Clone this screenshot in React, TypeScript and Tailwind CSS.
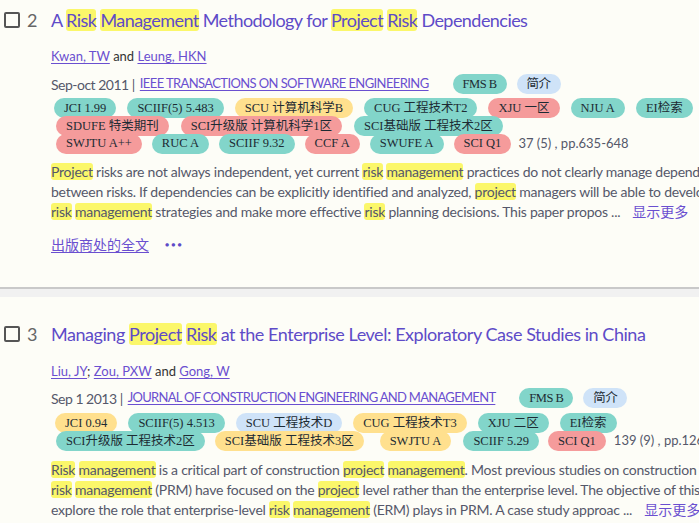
import React from "react";

const H = ({ children }: { children: React.ReactNode }) => (
  <span className="bg-[#fbf76a] rounded-[3px]">{children}</span>
);

type TagColor = "t" | "y" | "r" | "b";
const colorCls: Record<TagColor, string> = {
  t: "bg-[#82d5ca]",
  y: "bg-[#ffe08e]",
  r: "bg-[#f59b9b]",
  b: "bg-[#cfe3f8]",
};

const Tag = ({ c, children, ml = 0 }: { c: TagColor; children: React.ReactNode; ml?: number }) => (
  <span
    className={`${colorCls[c]} inline-flex items-center h-[20px] px-[10px] rounded-full text-[12.5px] text-[#1d2b33] whitespace-nowrap shrink-0 font-['Liberation_Serif','Noto_Sans_CJK_SC',serif]`}
    style={{ marginLeft: ml }}
  >
    {children}
  </span>
);

const Check = ({ n }: { n: number }) => (
  <div className="w-[51px] shrink-0 flex items-center h-[24px]">
    <div className="ml-[4px] w-[16px] h-[16px] border-2 border-[#555] rounded-[2px]" />
    <span className="ml-[7px] text-[18px] text-[#666]">{n}</span>
  </div>
);

const A = ({ children }: { children: React.ReactNode }) => (
  <span className="text-[#6a4fd0] underline underline-offset-2">{children}</span>
);

export default function App() {
  return (
    <div className="w-[699px] h-[523px] overflow-hidden bg-[#fdfdf7] font-['Lato','Noto_Sans_CJK_SC',sans-serif] text-[#55586a] whitespace-nowrap">
      {/* Item 1 */}
      <div className="h-[287px] pt-[8px]">
        <div className="flex">
          <Check n={2} />
          <div className="text-[18px] leading-[24px] tracking-[-0.55px] text-[#5e4bc8]">
            A <H>Risk</H> <H>Management</H> Methodology for <H>Project</H> <H>Risk</H> Dependencies
          </div>
        </div>
        <div className="pl-[51px]">
          <div className="mt-[14px] text-[13px] leading-[20px] text-[#333]">
            <A>Kwan, TW</A> and <A>Leung, HKN</A>
          </div>
          <div className="mt-[8px] flex items-center h-[20px] text-[14px] tracking-[-0.5px]">
            <span>Sep-oct 2011 |</span>
            <span className="ml-[5px] text-[13px] tracking-[-0.6px]"><A>IEEE TRANSACTIONS ON SOFTWARE ENGINEERING</A></span>
            <Tag c="t" ml={24}>FMS B</Tag>
            <Tag c="b" ml={10}>简介</Tag>
          </div>
          <div className="mt-[5px] flex items-center h-[18px]">
            <Tag c="t" ml={3}>JCI 1.99</Tag>
            <Tag c="t" ml={11}>SCIIF(5) 5.483</Tag>
            <Tag c="y" ml={11}>SCU 计算机科学B</Tag>
            <Tag c="t" ml={11}>CUG 工程技术T2</Tag>
            <Tag c="r" ml={11}>XJU 一区</Tag>
            <Tag c="t" ml={11}>NJU A</Tag>
            <Tag c="t" ml={11}>EI检索</Tag>
          </div>
          <div className="flex items-center h-[18px]">
            <Tag c="r" ml={5}>SDUFE 特类期刊</Tag>
            <Tag c="r" ml={12}>SCI升级版 计算机科学1区</Tag>
            <Tag c="t" ml={12}>SCI基础版 工程技术2区</Tag>
          </div>
          <div className="flex items-center h-[17px]">
            <Tag c="r" ml={5}>SWJTU A++</Tag>
            <Tag c="t" ml={10}>RUC A</Tag>
            <Tag c="t" ml={10}>SCIIF 9.32</Tag>
            <Tag c="r" ml={10}>CCF A</Tag>
            <Tag c="t" ml={10}>SWUFE A</Tag>
            <Tag c="r" ml={10}>SCI Q1</Tag>
            <span className="ml-[7px] text-[13px]">37 (5) , pp.635-648</span>
          </div>
          <div className="mt-[10px] text-[14px] tracking-[-0.25px] leading-[20px]">
            <div><H>Project</H> risks are not always independent, yet current <H>risk</H> <H>management</H> practices do not clearly manage dependencies</div>
            <div>between risks. If dependencies can be explicitly identified and analyzed, <H>project</H> managers will be able to develop</div>
            <div>
              <H>risk</H> <H>management</H> strategies and make more effective <H>risk</H> planning decisions. This paper propos ...
              <span className="ml-[12px] text-[#6a4fd0] tracking-normal">显示更多</span>
            </div>
          </div>
          <div className="mt-[12px] flex items-center h-[20px] text-[14px]">
            <A>出版商处的全文</A>
            <span className="ml-[16px] text-[#5e4bc8] text-[7px] tracking-[2px]">●●●</span>
          </div>
        </div>
      </div>
      {/* separator */}
      <div className="h-[2px] bg-[#c9c9c9]" />
      <div className="h-[8px] bg-[#f1f1f1]" />
      {/* Item 2 */}
      <div className="pt-[25px]">
        <div className="flex">
          <Check n={3} />
          <div className="text-[18px] leading-[24px] tracking-[-0.45px] text-[#5e4bc8]">
            Managing <H>Project</H> <H>Risk</H> at the Enterprise Level: Exploratory Case Studies in China
          </div>
        </div>
        <div className="pl-[51px]">
          <div className="mt-[15px] text-[13px] leading-[20px] text-[#333]">
            <A>Liu, JY</A>; <A>Zou, PXW</A> and <A>Gong, W</A>
          </div>
          <div className="mt-[7px] flex items-center h-[20px] text-[14px] tracking-[-0.5px]">
            <span>Sep 1 2013 |</span>
            <span className="ml-[5px] text-[13px] tracking-[-0.7px]"><A>JOURNAL OF CONSTRUCTION ENGINEERING AND MANAGEMENT</A></span>
            <Tag c="t" ml={24}>FMS B</Tag>
            <Tag c="b" ml={10}>简介</Tag>
          </div>
          <div className="mt-[6px] flex items-center h-[18px]">
            <Tag c="y" ml={4}>JCI 0.94</Tag>
            <Tag c="t" ml={11}>SCIIF(5) 4.513</Tag>
            <Tag c="b" ml={11}>SCU 工程技术D</Tag>
            <Tag c="y" ml={11}>CUG 工程技术T3</Tag>
            <Tag c="t" ml={11}>XJU 二区</Tag>
            <Tag c="t" ml={11}>EI检索</Tag>
          </div>
          <div className="flex items-center h-[18px]">
            <Tag c="t" ml={5}>SCI升级版 工程技术2区</Tag>
            <Tag c="y" ml={10}>SCI基础版 工程技术3区</Tag>
            <Tag c="y" ml={16}>SWJTU A</Tag>
            <Tag c="t" ml={12}>SCIIF 5.29</Tag>
            <Tag c="r" ml={9}>SCI Q1</Tag>
            <span className="ml-[8px] text-[13px]">139 (9) , pp.1268-1274</span>
          </div>
          <div className="mt-[10px] text-[14px] tracking-[-0.25px] leading-[20px]">
            <div><H>Risk</H> <H>management</H> is a critical part of construction <H>project</H> <H>management</H>. Most previous studies on construction <H>project</H></div>
            <div><H>risk</H> <H>management</H> (PRM) have focused on the <H>project</H> level rather than the enterprise level. The objective of this study</div>
            <div>
              explore the role that enterprise-level <H>risk</H> <H>management</H> (ERM) plays in PRM. A case study approac ...
              <span className="ml-[12px] text-[#6a4fd0] tracking-normal">显示更多</span>
            </div>
          </div>
        </div>
      </div>
    </div>
  );
}
